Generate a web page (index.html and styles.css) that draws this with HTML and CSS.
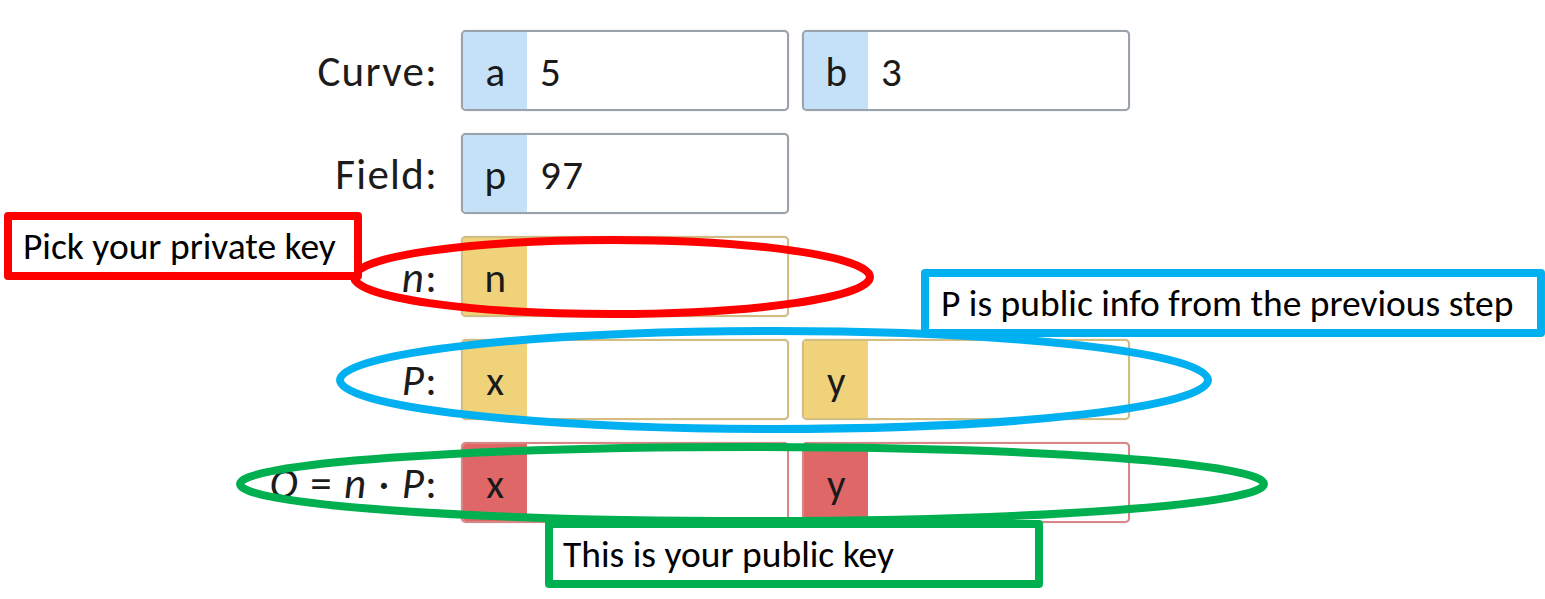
FILE: index.html
```html
<!DOCTYPE html>
<html>
<head>
<meta charset="utf-8">
<link rel="stylesheet" href="styles.css">
</head>
<body>
<div class="page">
  <div class="form">
    <div class="row">
      <div class="label">Curve:</div>
      <div class="ig blue"><span class="addon">a</span><span class="val">5</span></div>
      <div class="ig blue"><span class="addon">b</span><span class="val">3</span></div>
    </div>
    <div class="row">
      <div class="label">Field:</div>
      <div class="ig blue"><span class="addon">p</span><span class="val">97</span></div>
    </div>
    <div class="row">
      <div class="label"><i>n</i>:</div>
      <div class="ig yellow short"><span class="addon">n</span><span class="val"></span></div>
    </div>
    <div class="row">
      <div class="label"><i>P</i>:</div>
      <div class="ig yellow"><span class="addon">x</span><span class="val"></span></div>
      <div class="ig yellow"><span class="addon">y</span><span class="val"></span></div>
    </div>
    <div class="row">
      <div class="label"><i>Q</i> = <i>n</i> · <i>P</i>:</div>
      <div class="ig red"><span class="addon">x</span><span class="val"></span></div>
      <div class="ig red"><span class="addon">y</span><span class="val"></span></div>
    </div>
  </div>

  <svg class="marks" width="1545" height="599" viewBox="0 0 1545 599">
    <ellipse cx="612" cy="277" rx="258" ry="37" fill="none" stroke="#ff0000" stroke-width="8"/>
    <ellipse cx="774" cy="380" rx="434" ry="49" fill="none" stroke="#00b0f0" stroke-width="8"/>
    <ellipse cx="752" cy="484" rx="512" ry="37" fill="none" stroke="#00b050" stroke-width="8"/>
  </svg>

  <div class="note note-red">Pick your private key</div>
  <div class="note note-blue">P is public info from the previous step</div>
  <div class="note note-green">This is your public key</div>
</div>
</body>
</html>
```
FILE: styles.css
```css
html, body {
  margin: 0;
  padding: 0;
  background: #ffffff;
}
body {
  width: 1545px;
  height: 599px;
  overflow: hidden;
  font-family: Carlito, Lato, "Noto Sans", sans-serif;
  color: #1a1a1a;
}
.page {
  position: relative;
  width: 1545px;
  height: 599px;
}
.form {
  display: flex;
  flex-direction: column;
  gap: 22px;
  padding-top: 30px;
}
.row {
  display: flex;
  align-items: center;
  height: 81px;
}
.label {
  width: 438px;
  margin-right: 23px;
  text-align: right;
  font-size: 43px;
  letter-spacing: 1.3px;
  color: #1c1c1c;
  padding-top: 2px;
}
.label i {
  font-style: italic;
}
.ig {
  box-sizing: border-box;
  width: 328px;
  height: 81px;
  margin-right: 13px;
  border: 2px solid #a3a3a3;
  border-radius: 5px;
  display: flex;
  overflow: hidden;
  background: #fff;
  font-size: 41px;
  letter-spacing: 1.5px;
  color: #1a1a1a;
  box-shadow: 0 0 1px rgba(0, 0, 0, 0.35);
}
.addon {
  width: 62px;
  display: flex;
  align-items: center;
  justify-content: center;
  padding-left: 2px;
  padding-top: 2px;
}
.val {
  flex: 1;
  display: flex;
  align-items: center;
  padding-left: 13px;
  padding-top: 2px;
}
.blue .addon { background: #c5e1f7; }
.blue { border-color: #9aa3ab; }
.yellow .addon { background: #efd27a; }
.yellow { border-color: #d3bd80; }
.red .addon { background: #e06767; }
.red { border-color: #d98686; }

.marks {
  position: absolute;
  left: 0;
  top: 0;
  pointer-events: none;
}
.note {
  position: absolute;
  box-sizing: border-box;
  height: 68px;
  border: 8px solid;
  border-radius: 4px;
  background: #ffffff;
  display: flex;
  align-items: center;
  font-family: Carlito, Lato, "Noto Sans", sans-serif;
  font-size: 37.5px;
  color: #000;
  white-space: nowrap;
}
.note-red {
  left: 4px;
  top: 212px;
  width: 358px;
  border-color: #ff0000;
  padding-left: 11px;
}
.note-blue {
  left: 921px;
  top: 269px;
  width: 624px;
  border-color: #00b0f0;
  padding-left: 12px;
}
.note-green {
  left: 545px;
  top: 520px;
  width: 498px;
  border-color: #00b050;
  padding-left: 10px;
}
```
